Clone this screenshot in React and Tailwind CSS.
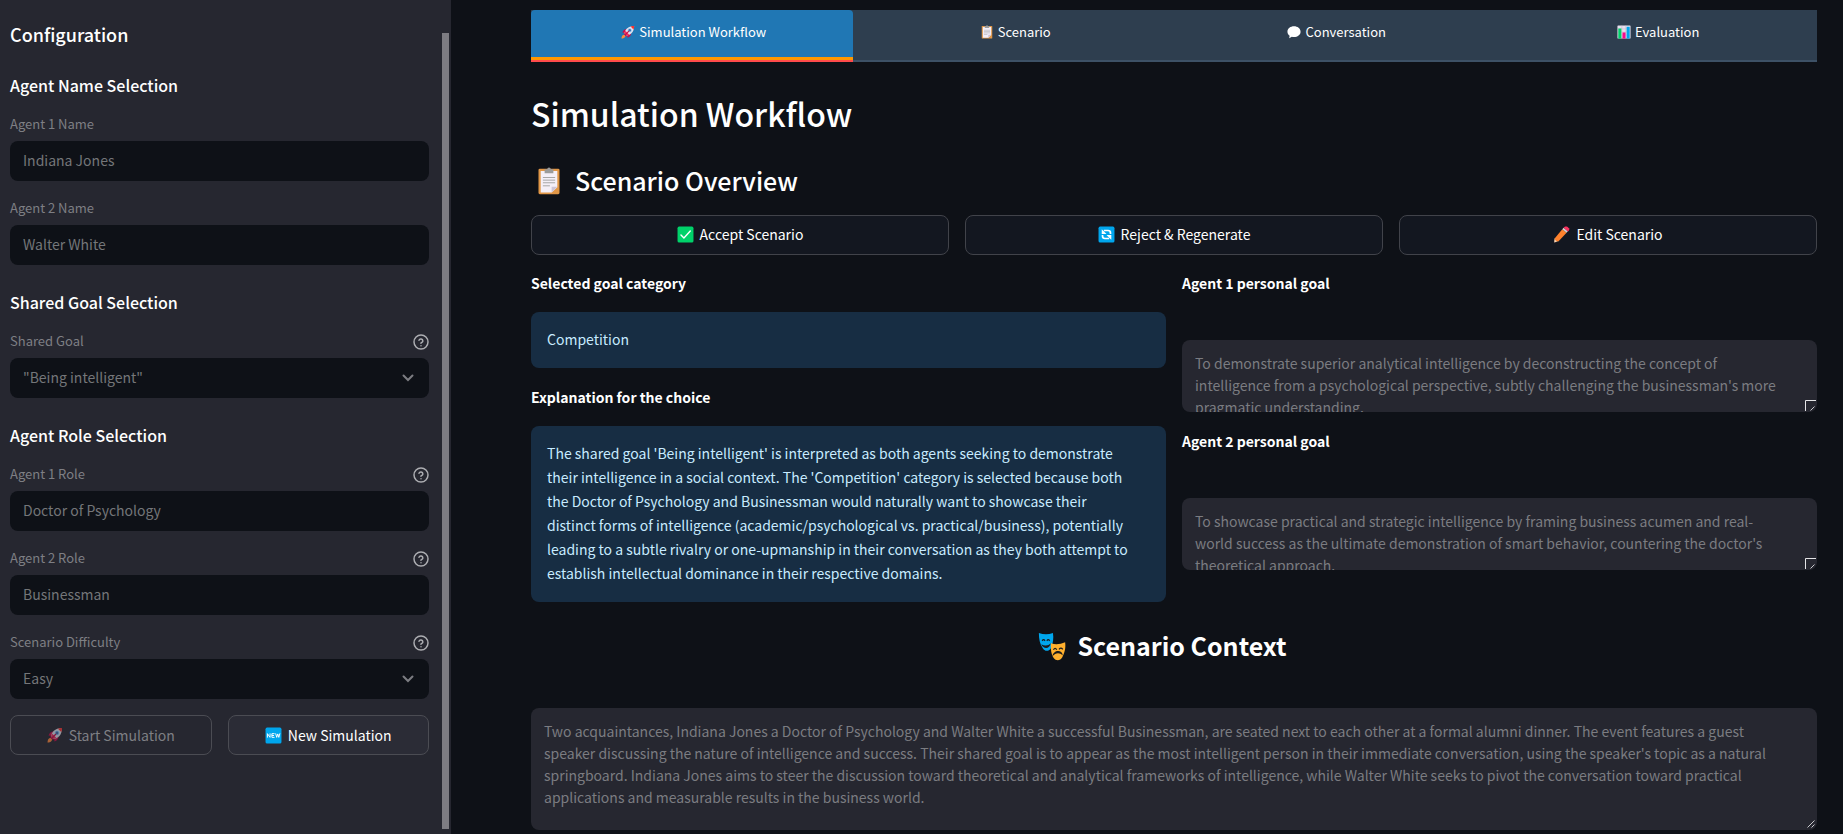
import { useId, useState } from "react";

function Svg({ className, children, label }) {
  return (
    <svg viewBox="0 0 32 32" className={`shrink-0 ${className}`} aria-hidden={!label} fill="none">
      {children}
    </svg>
  );
}

function Rocket({ className }) {
  return (
    <Svg className={className}>
      <path d="M13 9C8 9 5 12 3 17L10 18Z" fill="#ca0b4a" />
      <path d="M23 19C23 24 20 27 15 29L14 22Z" fill="#ca0b4a" />
      <path d="M1 31C1 26 3 22 7 22C10 22 11 26 9 28C7 30 4 31 1 31Z" fill="#ff8a3c" />
      <path d="M6 20L12 26L15 23L9 17Z" fill="#ca0b4a" />
      <path d="M8 19C9 11 15 2 30 2C30 17 21 23 13 24Z" fill="#e3e0ea" />
      <path d="M22 3.500C25 2.200 27 2 30 2C30 5 29.800 7 28.500 10Z" fill="#f8312f" />
      <path d="M8 19L10 13L19 22L13 24Z" fill="#f0305a" />
      <circle cx="20" cy="12" r="4.500" fill="#83cbff" />
      <circle cx="20" cy="12" r="2.800" fill="#4a6aa5" />
      <path d="M18 14L9 23" stroke="#ca0b4a" strokeWidth="2.400" />
    </Svg>
  );
}

function Clipboard({ className }) {
  return (
    <Svg className={className}>
      <rect x="4" y="2" width="24" height="29" rx="1.500" fill="#e19747" />
      <path d="M6.500 4.500H25.500V23L19 29H6.500Z" fill="#f4eff8" />
      <path d="M25.500 22.500L19 29V22.500Z" fill="#cdc4d6" />
      <path d="M14 2.500A2 2 0 0 1 18 2.500H21V7H11V2.500Z" fill="#9b9b9b" />
      <path d="M9 12H23M9 15H23M9 18H23M9 21.500H17" stroke="#9b9b9b" strokeWidth="1" />
    </Svg>
  );
}

function Bubble({ className }) {
  return (
    <Svg className={className}>
      <path d="M16 3C24 3 31 8 31 15.500C31 23 24 27.500 16 27.500C14 27.500 13 27.500 11 27L5 30L6 24.500C3 22.500 1 19 1 15.500C1 8 8 3 16 3Z" fill="#ffffff" />
    </Svg>
  );
}

function BarChart({ className }) {
  return (
    <Svg className={className}>
      <rect x="1" y="1" width="30" height="30" rx="1.500" fill="#e6dfee" />
      <path d="M2 9H30M2 16H30M2 23H30M11 1V31M20 1V31" stroke="#b9b3c4" strokeWidth="1" />
      <rect x="3" y="8" width="7" height="23" fill="#00d26a" />
      <rect x="12.500" y="17" width="7" height="14" fill="#f70a8d" />
      <rect x="22" y="4" width="7" height="27" fill="#00a6ed" />
    </Svg>
  );
}

function CheckMark({ className }) {
  return (
    <Svg className={className}>
      <rect x="1" y="1" width="30" height="30" rx="3" fill="#00d26a" />
      <path d="M7.500 17L13 22.500L25 9.500" stroke="#fff" strokeWidth="2.600" strokeLinecap="round" strokeLinejoin="round" />
    </Svg>
  );
}

function Refresh({ className }) {
  return (
    <Svg className={className}>
      <rect x="1" y="1" width="30" height="30" rx="3" fill="#00a6ed" />
      <path d="M11 8.500H19A4.500 4.500 0 0 1 23.500 13V15M21 23.500H13A4.500 4.500 0 0 1 8.500 19V17" stroke="#fff" strokeWidth="3.200" />
      <path d="M7 6V15H16Z" fill="#fff" />
      <path d="M25 26V17H16Z" fill="#fff" />
    </Svg>
  );
}

function Pencil({ className }) {
  return (
    <Svg className={className}>
      <path d="M3 23L9 28.500L3 31C2 31.500 1.500 30.500 2 30Z" fill="#fcd5b0" />
      <path d="M2 29L4 31L2 31Z" fill="#402a32" />
      <path d="M3 23.500L17.500 6L25.500 12.500L10 29C7 29 4 27 3 23.500Z" fill="#ff822d" />
      <path d="M17.500 6L20 3.500L28 10L25.500 12.500Z" fill="#d3d3d3" />
      <path d="M20 3.500L22 1.500C23.500 0.500 25.500 0.500 27 1.500L30 4C31 5.500 31 7 30 8.500L28 10.500Z" fill="#f8315f" />
    </Svg>
  );
}

function NewBadge({ className }) {
  return (
    <Svg className={className}>
      <rect x="1" y="1" width="30" height="30" rx="3" fill="#00a6ed" />
      <path d="M4.500 20V12.500L9.500 19.500V12M18 12.500H13V19.500H18M13 16H17M20 12L22 19.500L24 13L26 19.500L28 12" stroke="#fff" strokeWidth="1.800" />
    </Svg>
  );
}

function Masks({ className }) {
  return (
    <Svg className={className}>
      <path d="M2 2C7 4 12 4 17 2C18 8 17 13 15 18C13 22 8 22 6 18C3 14 2 8 2 2Z" fill="#00a6ed" />
      <path d="M4.500 14C8 16 12 16 14.500 13C14 19 7 20 4.500 14Z" fill="#1c1c1c" />
      <path d="M5.500 10.500Q7 8 8.500 10.500M10.500 10.500Q12 8 13.500 10.500" stroke="#1c1c1c" strokeWidth="1.300" />
      <path d="M15 13C20 15 25 14 30 12C31 19 29 24 27 28C25 32 20 32 18 29C15 25 14.500 19 15 13Z" fill="#ffb02e" />
      <path d="M16.500 27C17 20 27 19 27.500 26C24 23 20 23 16.500 27Z" fill="#1c1c1c" />
      <path d="M17.500 20Q19.500 17 21 20M23.500 19.500Q25.500 17 27.500 19.500" stroke="#1c1c1c" strokeWidth="1.300" />
    </Svg>
  );
}

function HelpIcon() {
  return (
    <svg viewBox="0 0 24 24" className="size-4" fill="none" stroke="#adaeb2" strokeWidth="2.200" strokeLinecap="round" strokeLinejoin="round" aria-hidden="true">
      <circle cx="12" cy="12" r="10.500" />
      <path d="M9 9.500a3 3 0 0 1 5.800 1c0 2-2.900 2.700-2.900 3.300M12 17.500h.01" />
    </svg>
  );
}

function Field({ label, help, children }) {
  const id = useId();
  return (
    <div>
      <div className="mb-1 flex h-6 items-center justify-between">
        <label htmlFor={id} className="pb-0.5 text-[13px] leading-6 text-[#7e7f84]">
          {label}
        </label>
        {help && (
          <button type="button" aria-label={`Help: ${label}`}>
            <HelpIcon />
          </button>
        )}
      </div>
      {children(id)}
    </div>
  );
}

const controlClass =
  "block h-10 w-full appearance-none rounded-lg bg-[#0e1117] px-[13px] pb-0.5 text-sm text-[#747679] opacity-100 outline-none";

function TextField({ label, value, help }) {
  return (
    <Field label={label} help={help}>
      {(id) => <input id={id} type="text" defaultValue={value} disabled className={controlClass} />}
    </Field>
  );
}

function SelectField({ label, value }) {
  return (
    <Field label={label} help>
      {(id) => (
        <div className="relative">
          <select id={id} disabled className={controlClass} defaultValue={value}>
            <option>{value}</option>
          </select>
          <svg viewBox="0 0 12 8" className="pointer-events-none absolute top-4 right-[15px] h-2 w-3" fill="none" stroke="#7c7d82" strokeWidth="2" strokeLinecap="round" aria-hidden="true">
            <path d="M1.500 1.500L6 6L10.500 1.500" />
          </svg>
        </div>
      )}
    </Field>
  );
}

function Section({ title, children }) {
  return (
    <section className="flex flex-col gap-4">
      <h3 className="text-base leading-6 font-medium text-white">{title}</h3>
      {children}
    </section>
  );
}

function Sidebar() {
  return (
    <aside className="flex w-[451px] shrink-0 bg-[#262730] pr-0.5">
      <div className="flex flex-1 flex-col pt-[22px] pr-[13px] pl-2.5">
        <h2 className="mb-[27px] text-lg leading-6 font-medium text-white">Configuration</h2>
        <div className="flex flex-col gap-[25px]">
          <Section title="Agent Name Selection">
            <TextField label="Agent 1 Name" value="Indiana Jones" />
            <TextField label="Agent 2 Name" value="Walter White" />
          </Section>
          <Section title="Shared Goal Selection">
            <SelectField label="Shared Goal" value={'"Being intelligent"'} />
          </Section>
          <Section title="Agent Role Selection">
            <TextField label="Agent 1 Role" value="Doctor of Psychology" help />
            <TextField label="Agent 2 Role" value="Businessman" help />
            <SelectField label="Scenario Difficulty" value="Easy" />
            <div className="grid grid-cols-2 gap-4">
              <button type="button" disabled className="flex h-10 items-center justify-center gap-1.5 rounded-lg border border-[#4b4c53] text-sm text-[#7e7f84]">
                <Rocket className="size-4 opacity-60" />
                Start Simulation
              </button>
              <button type="button" className="flex h-10 items-center justify-center gap-1.5 rounded-lg border border-[#4b4c53] bg-[#2b2c36] text-sm text-white">
                <NewBadge className="size-[17px]" />
                New Simulation
              </button>
            </div>
          </Section>
        </div>
      </div>
      <div className="flex w-[7px] pt-[33px] pb-[5px]">
        <div className="flex-1 bg-[#7d7c82]" />
      </div>
    </aside>
  );
}

const tabs = [
  { name: "Simulation Workflow", Icon: Rocket },
  { name: "Scenario", Icon: Clipboard },
  { name: "Conversation", Icon: Bubble },
  { name: "Evaluation", Icon: BarChart },
];

function Tabs() {
  const [active, setActive] = useState(tabs[0].name);
  return (
    <div role="tablist" className="grid grid-cols-4 bg-[#2e3e4f]">
      {tabs.map(({ name, Icon }) => {
        const selected = name === active;
        return (
          <button
            key={name}
            type="button"
            role="tab"
            aria-selected={selected}
            onClick={() => setActive(name)}
            className={`flex h-[52px] flex-col border-b-2 text-[13px] leading-6 text-white ${
              selected ? "rounded-t border-[#ff4b4b] bg-[#2077b4]" : "border-[#3d5166]"
            }`}
          >
            <span className="flex w-full flex-1 items-start justify-center pt-2.5">
              <span className="flex h-6 items-center gap-1 pl-1">
                <Icon className="size-3.5" />
                {name}
              </span>
            </span>
            {selected && <span className="h-[3px] w-full bg-[#ff9800]" />}
          </button>
        );
      })}
    </div>
  );
}

function ActionButton({ Icon, children }) {
  return (
    <button type="button" className="flex h-10 items-center justify-center gap-1.5 rounded-lg border border-[#41434a] bg-[#131720] pb-0.5 text-sm text-white">
      <Icon className="size-[17px]" />
      {children}
    </button>
  );
}

function InfoBlock({ title, children }) {
  return (
    <section className="flex flex-col gap-[17px]">
      <h4 className="text-sm leading-6 font-semibold text-white">{title}</h4>
      <p className="rounded-lg bg-[#172d43] px-4 pt-[15px] pb-[17px] text-sm leading-6 whitespace-pre-line text-[#c7ebff]">
        {children}
      </p>
    </section>
  );
}

const areaClass =
  "block w-full resize-none overflow-hidden rounded-lg bg-[#262730] px-[13px] py-3 text-sm leading-[22px] text-[#7b7c81] opacity-100 outline-none";

function GoalBlock({ title, value }) {
  const id = useId();
  return (
    <section className="flex flex-col gap-[45px]">
      <label htmlFor={id} className="text-sm leading-6 font-semibold text-white">
        {title}
      </label>
      <div className="relative">
        <textarea id={id} disabled defaultValue={value} className={`${areaClass} h-[72px]`} />
        <svg viewBox="0 0 11 11" className="pointer-events-none absolute right-px bottom-px size-[11px]" fill="none" aria-hidden="true">
          <path d="M0.500 11V0.500H11" stroke="#e4e4e6" />
          <path d="M5.500 10.500L9.500 6.500" stroke="#c8c8cc" />
        </svg>
      </div>
    </section>
  );
}

const explanation = [
  "The shared goal 'Being intelligent' is interpreted as both agents seeking to demonstrate",
  "their intelligence in a social context. The 'Competition' category is selected because both",
  "the Doctor of Psychology and Businessman would naturally want to showcase their",
  "distinct forms of intelligence (academic/psychological vs. practical/business), potentially",
  "leading to a subtle rivalry or one-upmanship in their conversation as they both attempt to",
  "establish intellectual dominance in their respective domains.",
].join("\n");

const agent1Goal = [
  "To demonstrate superior analytical intelligence by deconstructing the concept of",
  "intelligence from a psychological perspective, subtly challenging the businessman's more",
  "pragmatic understanding.",
].join("\n");

const agent2Goal = [
  "To showcase practical and strategic intelligence by framing business acumen and real-",
  "world success as the ultimate demonstration of smart behavior, countering the doctor's",
  "theoretical approach.",
].join("\n");

const context = [
  "Two acquaintances, Indiana Jones a Doctor of Psychology and Walter White a successful Businessman, are seated next to each other at a formal alumni dinner. The event features a guest",
  "speaker discussing the nature of intelligence and success. Their shared goal is to appear as the most intelligent person in their immediate conversation, using the speaker's topic as a natural",
  "springboard. Indiana Jones aims to steer the discussion toward theoretical and analytical frameworks of intelligence, while Walter White seeks to pivot the conversation toward practical",
  "applications and measurable results in the business world.",
].join("\n");

export default function App() {
  return (
    <div className="flex min-h-screen bg-[#0e1117] font-['Noto_Sans_CJK_SC',sans-serif]">
      <Sidebar />
      <main className="min-w-0 flex-1 pt-2.5 pr-[26px] pb-1 pl-20">
        <Tabs />
        <h1 className="mt-[27px] text-[32px] leading-[48px] font-medium text-white">Simulation Workflow</h1>
        <h2 className="mt-7 flex h-8 items-center gap-3 pl-1 text-[25px] font-medium text-white">
          <Clipboard className="size-7" />
          Scenario Overview
        </h2>
        <div className="mt-[18px] grid grid-cols-3 gap-4">
          <ActionButton Icon={CheckMark}>Accept Scenario</ActionButton>
          <ActionButton Icon={Refresh}>Reject &amp; Regenerate</ActionButton>
          <ActionButton Icon={Pencil}>Edit Scenario</ActionButton>
        </div>
        <div className="mt-4 grid grid-cols-2 gap-4">
          <div className="flex flex-col gap-[17px]">
            <InfoBlock title="Selected goal category">Competition</InfoBlock>
            <InfoBlock title="Explanation for the choice">{explanation}</InfoBlock>
          </div>
          <div className="flex flex-col gap-[17px]">
            <GoalBlock title="Agent 1 personal goal" value={agent1Goal} />
            <GoalBlock title="Agent 2 personal goal" value={agent2Goal} />
          </div>
        </div>
        <h2 id="context-title" className="mt-7 flex h-8 items-center justify-center gap-2.5 pr-6 text-[25px] font-bold text-white">
          <Masks className="size-[30px]" />
          Scenario Context
        </h2>
        <div className="relative mt-[46px]">
          <textarea aria-labelledby="context-title" disabled defaultValue={context} className={`${areaClass} h-[122px]`} />
          <svg viewBox="0 0 8 8" className="pointer-events-none absolute right-0.5 bottom-0.5 size-2" fill="none" stroke="#c8c8cc" aria-hidden="true">
            <path d="M0.500 7.500L7.500 0.500M4.500 7.500L7.500 4.500" />
          </svg>
        </div>
      </main>
    </div>
  );
}
